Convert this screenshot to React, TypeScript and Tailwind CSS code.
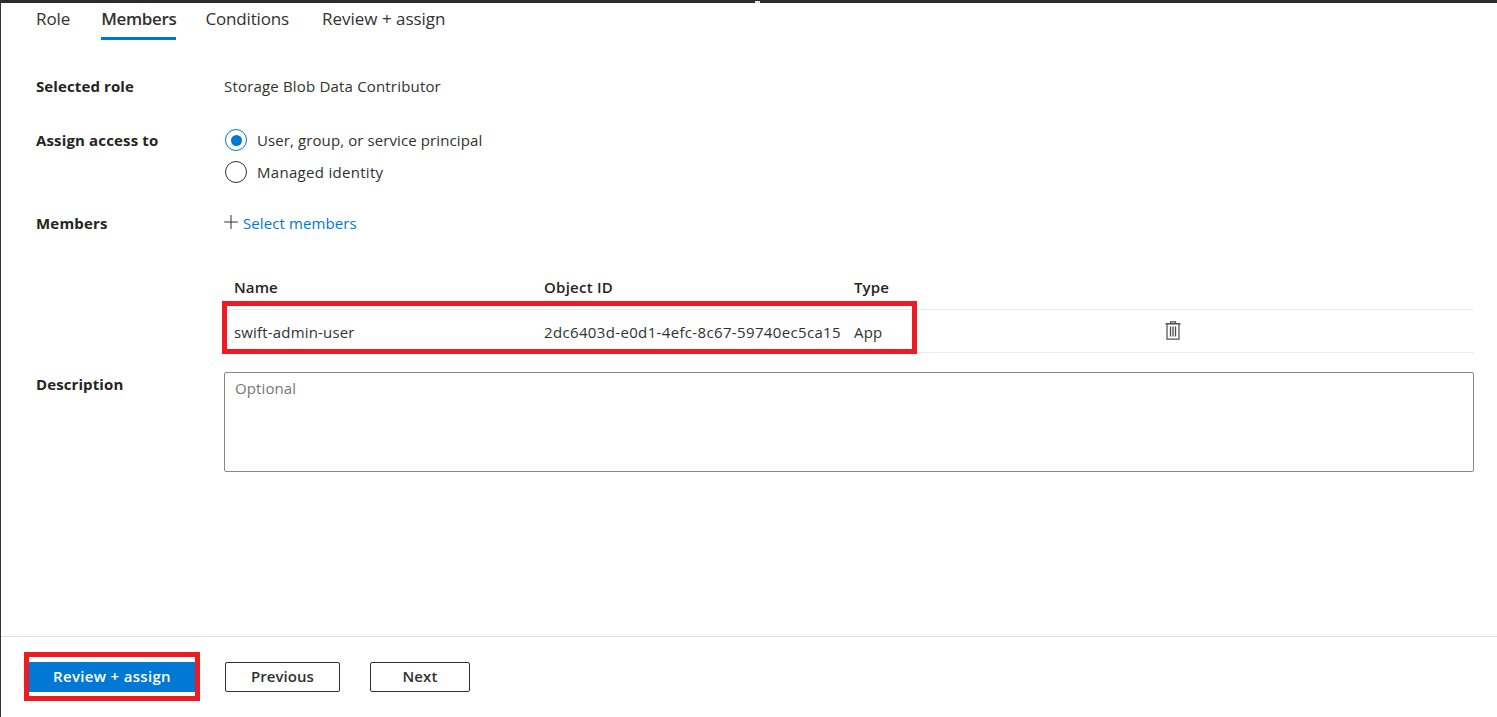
import { Plus } from 'lucide-react'

const font = "font-['Open_Sans','Noto_Sans',sans-serif]"

function Radio({ checked, label, spacing }: { checked?: boolean; label: string; spacing: string }) {
  return (
    <div className="flex items-center h-[22px] gap-[10px]">
      <span className={`w-[22px] h-[22px] ml-px rounded-full border flex items-center justify-center ${checked ? 'border-[#0078d4]' : 'border-[#323130]'}`}>
        {checked && <span className="w-[11px] h-[11px] rounded-full bg-[#0078d4]" />}
      </span>
      <span className={`text-[15px] text-[#323130] ${spacing}`}>{label}</span>
    </div>
  )
}

function TrashIcon() {
  return (
    <svg width="16" height="19" viewBox="0 0 16 19" fill="none" stroke="#4d4d4d" strokeWidth="1.2">
      <path d="M5.5 2.5V.8h5v1.7" />
      <path d="M.5 2.8h15" strokeWidth="1.5" />
      <path d="M2 3v15.2h12V3" />
      <path d="M5.5 5.5v10M8 5.5v10M10.5 5.5v10" strokeWidth="1.3" />
    </svg>
  )
}

export default function App() {
  return (
    <div className={`${font} h-[717px] w-full flex flex-col bg-white border-l border-[#333] overflow-hidden text-[#323130]`}>
      <div className="relative h-[3px] bg-[#2b2b2b] -ml-px shrink-0">
        <div className="absolute left-[755px] top-[1px] w-[5px] h-[2px] bg-[#e6e6e6]" />
      </div>

      {/* tabs */}
      <div className="flex h-[37px] pl-[35px] text-[17px] shrink-0">
        <div className="h-full pt-[3px] mr-[31px] tracking-[-0.1px]">Role</div>
        <div className="h-full pt-[3px] mr-[29px] font-semibold border-b-[3px] border-[#0078d4] tracking-[-0.35px]">Members</div>
        <div className="h-full pt-[3px] mr-[33px] tracking-[-0.15px]">Conditions</div>
        <div className="h-full pt-[3px] tracking-[-0.02px]">Review + assign</div>
      </div>

      {/* form */}
      <div className="flex-1 pl-[35px] pr-[23px] text-[15px]">
        <div className="flex h-[22px] items-center mt-[35px]">
          <div className="w-[188px] font-bold text-[#252423] tracking-[0.11px]">Selected role</div>
          <div className="tracking-[0.18px]">Storage Blob Data Contributor</div>
        </div>

        <div className="flex mt-[32px]">
          <div className="w-[188px] h-[22px] flex items-center font-bold text-[#252423] tracking-[0.15px]">Assign access to</div>
          <div className="flex flex-col gap-[10px]">
            <Radio checked label="User, group, or service principal" spacing="tracking-[0.1px]" />
            <Radio label="Managed identity" spacing="tracking-[0.3px]" />
          </div>
        </div>

        <div className="flex h-[22px] items-center mt-[29px]">
          <div className="w-[188px] font-bold text-[#252423] tracking-[0.2px]">Members</div>
          <div className="flex items-center text-[#0078d4] tracking-[0.1px]">
            <Plus size={22} strokeWidth={1.1} className="text-[#323130] mr-[1px] -mt-[3px] -ml-[4px]" />
            Select members
          </div>
        </div>

        {/* members table */}
        <div className="ml-[188px] mt-[41px]">
          <div className="grid grid-cols-[310px_310px_1fr] h-[35px] pl-[10px] font-semibold text-[#252423] tracking-[0.1px] border-b border-[#edebe9]">
            <div className="pt-[1px]">Name</div>
            <div className="pt-[1px] tracking-[0.25px]">Object ID</div>
            <div className="pt-[1px]">Type</div>
          </div>
          <div className="relative grid grid-cols-[310px_310px_310px_1fr] items-center h-[43px] pl-[10px] border-b border-[#edebe9]">
            <div className="pt-[2px] tracking-[0.17px]">swift-admin-user</div>
            <div className="pt-[2px] whitespace-nowrap tracking-[0.35px]">2dc6403d-e0d1-4efc-8c67-59740ec5ca15</div>
            <div className="pt-[2px] tracking-[0.2px]">App</div>
            <div className="-mt-[1px] pl-[1px]"><TrashIcon /></div>
            <div className="absolute left-[-2px] top-[-9px] w-[695px] h-[53px] border-[5px] border-[#ed1c24]" />
          </div>
        </div>

        <div className="flex mt-[19px]">
          <div className="w-[188px] pt-[1px] font-bold text-[#252423] tracking-[0.1px]">Description</div>
          <div className="flex-1 h-[100px] border border-[#8a8886] rounded-[2px] px-[10px] pt-[4px] text-[#7a7574] tracking-[0.1px]">Optional</div>
        </div>
      </div>

      {/* footer */}
      <div className="h-[81px] border-t border-[#e1dfdd] shrink-0 flex items-start pl-[28px] pt-[25px] text-[15px] font-semibold">
        <div className="relative w-[166px] h-[30px] pb-[1px] bg-[#0078d4] text-white flex items-center justify-center tracking-[0.33px]">
          Review + assign
          <div className="absolute left-[-5px] top-[-10px] w-[176px] h-[49px] border-[5px] border-[#ed1c24]" />
        </div>
        <div className="w-[115px] h-[30px] pb-[1px] ml-[30px] border border-[#323130] rounded-[2px] flex items-center justify-center tracking-[0.05px]">Previous</div>
        <div className="w-[100px] h-[30px] pb-[1px] ml-[30px] border border-[#323130] rounded-[2px] flex items-center justify-center tracking-[0.1px]">Next</div>
      </div>
    </div>
  )
}
